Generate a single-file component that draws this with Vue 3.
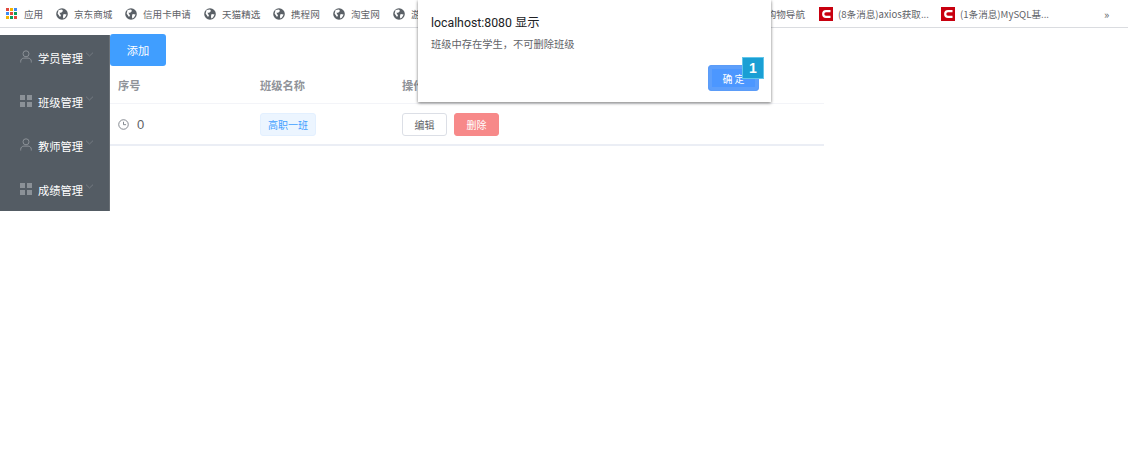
<template>
  <div class="bookmarks">
    <span class="apps">
      <i v-for="n in 9" :key="n" class="apps__dot" :style="{ background: dotColors[n - 1] }"></i>
    </span>
    <span class="bm bm--apps">应用</span>
    <span v-for="b in globeLinks" :key="b.name" class="bm" :style="{ width: b.w + 'px' }">
      <svg class="globe" viewBox="0 0 12 12" width="12" height="12">
        <circle cx="6" cy="6" r="5.8" fill="#5a6066" />
        <path d="M2.6 2 6 1.6 7 3 5.2 4.8 3.4 4.8 5 7.4 4 9 1.6 5.6ZM7.6 6 10.6 6.4 9 9.6 7.2 10.4 7 8Z" fill="#fff" />
      </svg>
      <span>{{ b.name }}</span>
    </span>
    <span class="bm bm--last">
      <span>购物导航</span>
    </span>
    <span v-for="c in csdnLinks" :key="c" class="bm bm--csdn">
      <svg class="csdn" viewBox="0 0 14 14" width="14" height="14">
        <rect width="14" height="14" fill="#c8000f" />
        <path d="M11.5 4.2H7a2.8 2.8 0 0 0 0 5.6h4.5" fill="none" stroke="#fff" stroke-width="2.2" />
      </svg>
      <span>{{ c }}</span>
    </span>
    <span class="more">»</span>
  </div>

  <div class="page">
    <aside class="side">
      <div v-for="m in menus" :key="m.name" class="menu">
        <svg v-if="m.icon === 'user'" class="menu__icon" viewBox="0 0 12 13" width="12" height="13">
          <circle cx="6" cy="3.8" r="3" fill="none" stroke="#8b9197" stroke-width="1" />
          <path d="M.7 12.5v-1.2c0-2 1.6-3.2 3.2-3.2h4.2c1.6 0 3.2 1.2 3.2 3.2v1.2" fill="none" stroke="#8b9197" stroke-width="1" />
        </svg>
        <span v-else class="menu__grid"><i></i><i></i><i></i><i></i></span>
        <span class="menu__name">{{ m.name }}</span>
        <svg class="menu__arrow" viewBox="0 0 10 6" width="9" height="5">
          <path d="M.8.8 5 4.8 9.2.8" fill="none" stroke="#7f868c" stroke-width=".9" />
        </svg>
      </div>
    </aside>

    <main class="main">
      <button class="add">添加</button>
      <div class="row row--head">
        <div class="cell cell--a">序号</div>
        <div class="cell cell--b">班级名称</div>
        <div class="cell">操作</div>
      </div>
      <div class="row row--body">
        <div class="cell cell--a cell--idx">
          <svg class="clock" viewBox="0 0 12 12" width="11" height="11">
            <circle cx="6" cy="6" r="5.2" fill="none" stroke="#7a7f87" stroke-width="1" />
            <path d="M6 3v3.2h2.8" fill="none" stroke="#7a7f87" stroke-width="1" />
          </svg>
          <span class="idx">0</span>
        </div>
        <div class="cell cell--b"><span class="tag">高职一班</span></div>
        <div class="cell cell--ops">
          <button class="btn">编辑</button>
          <button class="btn btn--del">删除</button>
        </div>
      </div>
    </main>
  </div>

  <div class="dialog">
    <div class="dialog__title">localhost:8080 显示</div>
    <div class="dialog__msg">班级中存在学生，不可删除班级</div>
    <div class="dialog__foot">
      <button class="ok">确 定</button>
    </div>
  </div>
  <div class="badge">1</div>
</template>

<script setup>
const dotColors = ['#e0483e', '#f4b400', '#3f8af0', '#3f8af0', '#e0483e', '#0f9d58', '#f4b400', '#0f9d58', '#e0483e']

const globeLinks = [
  { name: '京东商城', w: 69 },
  { name: '信用卡申请', w: 79 },
  { name: '天猫精选', w: 69 },
  { name: '携程网', w: 60 },
  { name: '淘宝网', w: 60 },
  { name: '游戏', w: 60 },
]

const csdnLinks = ['(8条消息)axios获取...', '(1条消息)MySQL基...']

const menus = [
  { name: '学员管理', icon: 'user' },
  { name: '班级管理', icon: 'grid' },
  { name: '教师管理', icon: 'user' },
  { name: '成绩管理', icon: 'grid' },
]
</script>

<style>
html, body { background: #fff; overflow: hidden; }
</style>

<style scoped>
.bookmarks {
  display: flex;
  align-items: center;
  height: 28px;
  box-sizing: border-box;
  padding-left: 6px;
  border-bottom: 1px solid #dadce0;
  background: #fff;
  font: 9.6px "Noto Sans CJK SC", "Liberation Sans", sans-serif;
  color: #5f6368;
  white-space: nowrap;
  overflow: hidden;
}
.apps { display: grid; grid-template-columns: repeat(3, 3px); gap: 1px; margin-right: 7px; }
.apps__dot { width: 3px; height: 3px; }
.bm { display: flex; align-items: center; gap: 6px; flex-shrink: 0; }
.bm--apps { width: 32px; }
.globe { flex-shrink: 0; }
.bm--last { width: 366px; justify-content: flex-end; padding-right: 14px; box-sizing: border-box; }
.bm--csdn { width: 122px; gap: 5px; }
.csdn { flex-shrink: 0; }
.more { margin-left: 41px; font-size: 11px; color: #5f6368; }

.page { display: flex; align-items: flex-start; margin-top: 6px; }
.side {
  width: 110px;
  margin-top: 1px;
  background: #545c64;
  box-shadow: inset -1px 0 0 #6a7076;
  flex-shrink: 0;
}
.menu {
  display: flex;
  align-items: center;
  height: 44px;
  padding: 1px 0 0 20px;
  box-sizing: border-box;
  font: 11.25px "Noto Sans CJK SC", sans-serif;
  color: #fff;
}
.menu__icon { flex-shrink: 0; margin-top: -2px; }
.menu__grid { display: grid; grid-template-columns: repeat(2, 5px); gap: 2px; width: 12px; margin-top: -2px; flex-shrink: 0; }
.menu__grid i { width: 5px; height: 5px; background: #8b9197; }
.menu__name { margin-left: 6px; }
.menu__arrow { margin: -6px 0 0 2px; flex-shrink: 0; }

.main { width: 714px; font: 11.25px "Noto Sans CJK SC", sans-serif; }
.add {
  display: block;
  width: 56px;
  height: 32px;
  border: 0;
  border-radius: 3px;
  background: #409eff;
  color: #fff;
  font: 11.25px "Noto Sans CJK SC", sans-serif;
  padding: 0;
}
.row { display: flex; align-items: center; }
.row--head { height: 38px; border-bottom: 1px solid #f3f4f8; font-weight: 700; color: #909399; box-sizing: border-box; }
.row--body { height: 42px; border-bottom: 2px solid #ebeef5; color: #606266; box-sizing: border-box; }
.cell { padding-left: 8px; }
.cell--a { width: 142px; box-sizing: border-box; display: flex; align-items: center; }
.cell--idx { padding-top: 1px; }
.cell--b { width: 142px; box-sizing: border-box; }
.cell--ops { display: flex; gap: 7px; }
.idx { margin-left: 8px; font: 13px "Liberation Sans", sans-serif; }
.tag {
  display: inline-block;
  height: 23px;
  line-height: 21px;
  width: 56px;
  box-sizing: border-box;
  text-align: center;
  background: #ecf5ff;
  border: 1px solid #e3f0ff;
  border-radius: 3px;
  color: #409eff;
  font-size: 10px;
}
.btn {
  width: 45px;
  height: 23px;
  padding: 0;
  border: 1px solid #dcdfe6;
  border-radius: 3px;
  background: #fff;
  color: #606266;
  font: 10px "Noto Sans CJK SC", sans-serif;
}
.btn--del { background: #f78989; border-color: #f78989; color: #fff; }

.dialog {
  position: absolute;
  left: 418px;
  top: 0;
  width: 353px;
  height: 102px;
  background: #fff;
  box-shadow: 0 1px 3px rgba(0, 0, 0, .55);
  padding: 15px 12px 0 13px;
  box-sizing: border-box;
  font-family: "Noto Sans CJK SC", sans-serif;
}
.dialog__title { font-size: 12.3px; line-height: 16px; color: #202124; font-family: Roboto, "Noto Sans CJK SC", sans-serif; }
.dialog__msg { margin-top: 6px; font-size: 10.25px; line-height: 14px; color: #5f6368; }
.dialog__foot { display: flex; justify-content: flex-end; margin-top: 14px; }
.ok {
  width: 51px;
  height: 26px;
  padding: 0;
  border: 1px solid #5b9cf8;
  border-radius: 3px;
  background: #4c97ff;
  box-shadow: inset 0 0 0 3px #5d9ffb;
  color: #fff;
  font: 10px "Noto Sans CJK SC", sans-serif;
}
.badge {
  position: absolute;
  left: 742px;
  top: 57px;
  width: 22px;
  height: 22px;
  box-sizing: border-box;
  background: #1a9fd4;
  border: 1px solid #62c6ea;
  color: #fff;
  font: 700 14px/20px "Liberation Sans", sans-serif;
  text-align: center;
}
</style>
